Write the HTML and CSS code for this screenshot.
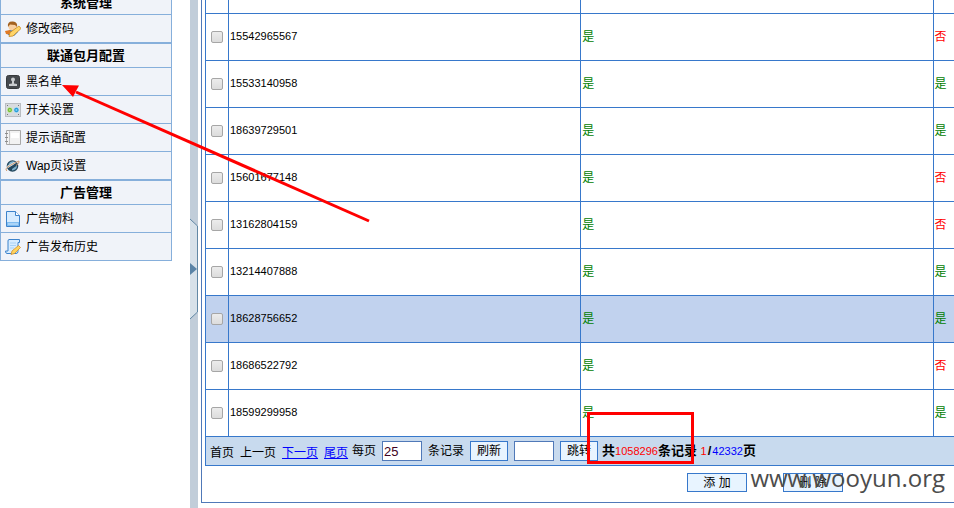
FILE: index.html
```html
<!DOCTYPE html>
<html lang="zh-CN">
<head>
<meta charset="utf-8">
<title>黑名单</title>
<link rel="stylesheet" href="styles.css">
</head>
<body>
<div class="page">
  <nav class="sidebar">
    <section class="group">
      <h2 class="group-title">系统管理</h2>
      <a class="item" href="#">
        <svg class="icon" viewBox="0 0 16 16"><path d="M2 11l4-3h4l3 3-4 4-6-1z" fill="#3f86d2"/><path d="M0 10l5-1 2 5-6-1z" fill="#e07a25"/><circle cx="7.500" cy="5.500" r="4" fill="#f9cfa0"/><path d="M3 6Q2 0 8 .5q5 .5 4 5.500L10 4 5 3.500z" fill="#a3611f"/><path d="M14 5l2 2.500-8 7.500-4 .5 1-4z" fill="#ffd569" stroke="#c98a22" stroke-width=".8"/></svg>
        修改密码</a>
    </section>
    <section class="group">
      <h2 class="group-title">联通包月配置</h2>
      <a class="item" href="#">
        <svg class="icon" viewBox="0 0 16 16"><rect x="1.500" y="1.500" width="13" height="13" rx="2" fill="#45494e" stroke="#36393c"/><circle cx="8" cy="5.500" r="2" fill="#c9cccf"/><path d="M7 7h2v2.500l3 .5v2H4v-2l3-.5z" fill="#c9cccf"/></svg>
        黑名单</a>
      <a class="item" href="#">
        <svg class="icon" viewBox="0 0 16 16"><rect x=".5" y="1.500" width="15" height="13" fill="#d8dbdf" stroke="#b9bdc2"/><path d="M2 3.500h1M13 3.500h1M2 12.500h1M13 12.500h1" stroke="#777"/><circle cx="4.800" cy="8" r="2.700" fill="#78bd38" stroke="#f4f8ee" stroke-width=".6"/><circle cx="11.400" cy="8" r="2.700" fill="#269bd8" stroke="#eef6fa" stroke-width=".6"/><circle cx="4.800" cy="8" r="1" fill="#b4e07e"/><circle cx="11.400" cy="8" r="1" fill="#7dd0f4"/></svg>
        开关设置</a>
      <a class="item" href="#">
        <svg class="icon" viewBox="0 0 16 16"><path d="M1.500.5h14v14h-14z" fill="#f2f2f2" stroke="#a8a8a8"/><path d="M4.500 1v13" stroke="#c4c4c4"/><path d="M0 3.500h3M0 7.500h3M0 11.500h3" stroke="#8c8c8c"/><path d="M6 3h8v5H6z" fill="#fff"/></svg>
        提示语配置</a>
      <a class="item" href="#">
        <svg class="icon" viewBox="0 0 16 16"><circle cx="7.500" cy="8" r="5.800" fill="#24485f"/><path d="M3.500 6q2-4 7-2L8 7 4 9zM7 11l5-3.500q0 4.500-5 5z" fill="#7eafca"/><path d="M2 8l7-4 2 1-8 5z" fill="#dcebf3"/><path d="M2 13Q-1 11 5 7.500T14 3q1 2-3 4.500" fill="none" stroke="#d09a70"/></svg>
        Wap页设置</a>
    </section>
    <section class="group">
      <h2 class="group-title">广告管理</h2>
      <a class="item" href="#">
        <svg class="icon" viewBox="0 0 16 16"><path d="M1.500.5h9l4 4v11h-13z" fill="#d7ecff" stroke="#3d83cb"/><path d="M10.500.5v4h4" fill="#fff" stroke="#3d83cb"/><path d="M2 11h12v4H2z" fill="#7fbcf0"/><path d="M3 13h10" stroke="#d7ecff"/></svg>
        广告物料</a>
      <a class="item" href="#">
        <svg class="icon" viewBox="0 0 16 16"><path d="M4 .5h10.500v3H13v9q0 2-2 2H2q-1.500 0-1.500-2.500H3V2q0-1.500 1-1.500z" fill="#d7ecff" stroke="#3d83cb"/><path d="M5 4h6M5 6.500h6M5 9h4" stroke="#a9d2f5"/><path d="M13.500 6.500l2 2-6 6-3.500 1 1-3.500z" fill="#ffd45d" stroke="#d2912e" stroke-width=".8"/></svg>
        广告发布历史</a>
    </section>
  </nav>

  <div class="splitter">
    <svg class="handle" viewBox="0 0 8 102"><path d="M0 1L7.500 8V94L0 101z" fill="#d7e1e9"/><path d="M0 1L7.500 8V94L0 101" fill="none" stroke="#6288a5"/><path d="M0 45l7 6-7 6z" fill="#5b84a6"/></svg>
  </div>

  <main class="panel">
    <table class="grid">
      <colgroup><col class="col-check"><col class="col-main"><col class="col-main"><col></colgroup>
      <tbody>
        <tr class="row-top"><td></td><td></td><td></td><td></td></tr>
        <tr><td><input type="checkbox" aria-label="15542965567"></td><td class="num">15542965567</td><td class="yes">是</td><td class="no">否</td></tr>
        <tr><td><input type="checkbox" aria-label="15533140958"></td><td class="num">15533140958</td><td class="yes">是</td><td class="yes">是</td></tr>
        <tr><td><input type="checkbox" aria-label="18639729501"></td><td class="num">18639729501</td><td class="yes">是</td><td class="yes">是</td></tr>
        <tr><td><input type="checkbox" aria-label="15601677148"></td><td class="num">15601677148</td><td class="yes">是</td><td class="no">否</td></tr>
        <tr><td><input type="checkbox" aria-label="13162804159"></td><td class="num">13162804159</td><td class="yes">是</td><td class="no">否</td></tr>
        <tr><td><input type="checkbox" aria-label="13214407888"></td><td class="num">13214407888</td><td class="yes">是</td><td class="yes">是</td></tr>
        <tr class="active"><td><input type="checkbox" aria-label="18628756652"></td><td class="num">18628756652</td><td class="yes">是</td><td class="yes">是</td></tr>
        <tr><td><input type="checkbox" aria-label="18686522792"></td><td class="num">18686522792</td><td class="yes">是</td><td class="no">否</td></tr>
        <tr><td><input type="checkbox" aria-label="18599299958"></td><td class="num">18599299958</td><td class="yes">是</td><td class="yes">是</td></tr>
      </tbody>
    </table>
    <div class="pager">
      <div class="pages"><span>首页</span><span>上一页</span><a href="#">下一页</a><a href="#">尾页</a></div>
      <label for="size">每页</label>
      <input class="box" id="size" type="text" value="25">
      <span>条记录</span>
      <button class="btn" type="button">刷新</button>
      <input class="box" type="text" aria-label="页码">
      <button class="btn" type="button">跳转</button>
      <div class="total">共<span class="red">1058296</span>条记录 <span class="red">1</span><span class="slash">/</span><span class="blue">42332</span>页</div>
    </div>
    <div class="actions">
      <button class="btn wide" type="button">添 加</button>
      <button class="btn wide" type="button">删 除</button>
    </div>
  </main>

  <svg class="arrow" viewBox="0 0 310 140"><path d="M14 7L307 136" stroke="#f00" stroke-width="3"/><path d="M0 0L17 0.500 14 6 11 12z" fill="#f00"/></svg>
  <div class="mark"></div>
  <div class="watermark">www.wooyun.org</div>
</div>
</body>
</html>
```
FILE: styles.css
```css
* { box-sizing: border-box; }

body {
  margin: 0;
  overflow: hidden;
  background: #fff;
  color: #000;
  font: 12px/16px "Liberation Sans", "Noto Sans CJK SC", sans-serif;
}

.page {
  position: relative;
  display: flex;
  min-height: 100vh;
  overflow: hidden;
}

/* Sidebar */
.sidebar {
  flex: none;
  width: 172px;
  margin-top: -10px;
}

.group {
  border: 1px solid #86afdb;
  border-bottom: 0;
  background: #f0f3f9;
}

.group-title {
  height: 24px;
  margin: 0;
  border-bottom: 1px solid #86afdb;
  font-size: 13px;
  line-height: 23px;
  text-align: center;
}

.item {
  display: flex;
  align-items: center;
  gap: 5px;
  height: 28px;
  padding-left: 4px;
  border-bottom: 1px solid #86afdb;
  color: #000;
  text-decoration: none;
}

.icon {
  width: 16px;
  height: 16px;
}

/* Splitter */
.splitter {
  display: flex;
  flex: none;
  align-items: flex-start;
  width: 8px;
  margin: 0 3px 0 18px;
  padding-top: 218px;
  background: #c1cdd9;
}

.handle {
  width: 8px;
  height: 102px;
}

/* Data panel */
.panel {
  flex: 1;
  min-width: 0;
  align-self: flex-start;
  padding-left: 3px;
  border: solid #5079b8;
  border-width: 0 0 1px 1px;
}

.grid {
  width: 100%;
  border-collapse: separate;
  border-spacing: 0;
  border-left: 1px solid #3778cb;
  table-layout: fixed;
}

.col-check { width: 23px; }
.col-main { width: 47.1%; }

.grid td {
  height: 47px;
  padding: 0 1px;
  border: solid #3778cb;
  border-width: 0 1px 1px 0;
}

.grid td:last-child { border-right: 0; }
.grid .row-top td { height: 14px; }
.grid td:first-child { padding: 0 5px 1px; }
.grid .active { background: #c1d2ee; }
.grid .num { padding-bottom: 2px; font-size: 11px; }
.yes { color: #008000; }
.no { color: #f00; }

input[type="checkbox"] {
  display: block;
  width: 12px;
  height: 12px;
  margin: 0;
  appearance: none;
  border: 1px solid #a6a6a6;
  border-radius: 2px;
  background: linear-gradient(#ececec, #dcdcdc);
}

/* Pager */
.pager {
  display: flex;
  align-items: center;
  gap: 6px;
  height: 29px;
  padding-left: 4px;
  border: solid #3778cb;
  border-width: 0 0 1px 1px;
  background: #c8daee;
  white-space: nowrap;
}

.pages {
  display: flex;
  gap: 6px;
  margin-right: -2px;
  padding-top: 3px;
}

.pages a { color: #00f; }

.box {
  width: 40px;
  height: 20px;
  padding: 0 1px;
  border: 1px solid #5079b8;
  background: #fff;
  color: #400020;
  font: 13px "Liberation Sans", sans-serif;
}

.btn {
  width: 38px;
  height: 20px;
  padding: 0;
  border: 1px solid #3778cb;
  background: #e8f4ff;
  color: #000;
  font: inherit;
  white-space: nowrap;
}

.total {
  margin-left: -2px;
  font-size: 13px;
  font-weight: bold;
}

.slash { padding: 0 1px; }

.red,
.blue {
  font-size: 11px;
  font-weight: normal;
}

.red { color: #f00; }
.blue { color: #00f; }

.actions {
  display: flex;
  justify-content: flex-end;
  gap: 36px;
  padding: 7px 111px 10px 0;
}

.wide {
  width: 60px;
  height: 19px;
}

/* Annotations over the page */
.arrow {
  position: absolute;
  top: 85px;
  left: 62px;
  width: 310px;
  height: 140px;
}

.mark {
  position: absolute;
  top: 412px;
  left: 587px;
  width: 107px;
  height: 52px;
  border: 3px solid #f00;
}

.watermark {
  position: absolute;
  top: 461px;
  right: 9px;
  color: #4c4c4c;
  font: 24px/34px "Open Sans", sans-serif;
}
```
